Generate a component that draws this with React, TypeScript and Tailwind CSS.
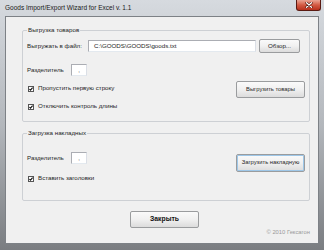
import React from "react";

const Check = () => (
  <svg width="6" height="6" viewBox="0 0 6 6" className="shrink-0">
    <rect x="0.5" y="0.5" width="5" height="5" fill="#fff" stroke="#555" strokeWidth="1" />
    <path d="M1.4 3 L2.5 4.2 L4.6 1.6" fill="none" stroke="#111" strokeWidth="1.1" />
  </svg>
);

const CheckRow = ({ label }: { label: string }) => (
  <div className="flex items-center h-[9px] pl-[1px] gap-[4px]">
    <Check />
    <span className="leading-none">{label}</span>
  </div>
);

const Btn = ({
  children,
  className = "",
}: {
  children: React.ReactNode;
  className?: string;
}) => (
  <div
    className={
      "flex items-center justify-center rounded-[2px] border border-[#9a9c9e] bg-gradient-to-b from-[#fafafa] via-[#f0f0f0] to-[#dcdcdc] leading-none whitespace-nowrap " +
      className
    }
  >
    {children}
  </div>
);

const SepBox = () => (
  <div className="w-[16px] h-[12px] bg-white border border-[#abadb3] border-r-[#dbdfe6] border-b-[#e3e9ef] flex items-center justify-center text-[6px] leading-none">
    ,
  </div>
);

export default function App() {
  return (
    <div
      className="w-[324px] h-[250px] flex flex-col bg-gradient-to-b from-[#d6dadf] via-[#b3b7bc] to-[#7a7d81] text-[#252525] text-[6.2px] overflow-hidden"
      style={{ fontFamily: '"Liberation Sans", Arial, sans-serif' }}
    >
      {/* title bar */}
      <div className="h-[16px] flex items-start shrink-0">
        <div className="pl-[5px] pt-[4px] text-[6.5px] leading-[8px] text-[#202020]">
          Goods Import/Export Wizard for Excel v. 1.1
        </div>
        <div className="ml-auto mr-[3px] w-[25px] h-[11px] rounded-b-[3px] border border-t-0 border-[#5a1a12] bg-gradient-to-b from-[#e9a393] via-[#d35a43] to-[#b8301c] flex items-center justify-center">
          <svg width="8" height="6" viewBox="0 0 8 6">
            <path d="M1.5 0.8 L6.5 5.2 M6.5 0.8 L1.5 5.2" stroke="#4a1008" strokeWidth="2.4" strokeLinecap="round" />
            <path d="M1.5 0.8 L6.5 5.2 M6.5 0.8 L1.5 5.2" stroke="#ffffff" strokeWidth="1.3" strokeLinecap="round" />
          </svg>
        </div>
      </div>

      {/* client area */}
      <div className="flex-1 mx-[5px] mb-[6px] bg-[#f0f0f0] border border-[#7d8186] flex flex-col pl-[16px] pr-[8px] pt-[9px]">
        {/* group 1 */}
        <fieldset className="w-[288px] border border-[#cdd0d4] rounded-[2px] px-[4px] pb-[10px]">
          <legend className="px-[1px] leading-[8px]">Выгрузка товаров</legend>
          <div className="flex items-center h-[14px] mt-[5px]">
            <span className="w-[61px] leading-none">Выгружать в файл:</span>
            <div className="w-[168px] h-[12px] bg-white border border-[#abadb3] border-r-[#dbdfe6] border-b-[#e3e9ef] flex items-center pl-[5px] leading-none">
              C:\GOODS\GOODS\goods.txt
            </div>
            <Btn className="ml-[3px] w-[41px] h-[14px]">Обзор...</Btn>
          </div>
          <div className="flex items-center mt-[11px] h-[12px]">
            <span className="w-[44px] leading-none">Разделитель</span>
            <SepBox />
          </div>
          <div className="flex items-start mt-[5px]">
            <div className="flex flex-col gap-[9px] pt-[3px]">
              <CheckRow label="Пропустить первую строку" />
              <CheckRow label="Отключить контроль длины" />
            </div>
            <Btn className="ml-auto w-[69px] h-[17px] text-[5.8px]">Выгрузить товары</Btn>
          </div>
        </fieldset>

        {/* group 2 */}
        <fieldset className="w-[288px] border border-[#cdd0d4] rounded-[2px] px-[4px] pb-[17px] mt-[7px]">
          <legend className="px-[1px] leading-[8px]">Загрузка накладных</legend>
          <div className="flex items-start mt-[15px]">
            <div className="flex flex-col">
              <div className="flex items-center h-[12px]">
                <span className="w-[44px] leading-none">Разделитель</span>
                <SepBox />
              </div>
              <div className="mt-[10px]">
                <CheckRow label="Вставить заголовки" />
              </div>
            </div>
            <Btn className="ml-auto mt-[2px] w-[69px] h-[18px] text-[5.8px] border-[#2f2f2f] shadow-[inset_0_0_0_1px_#9ec7e8]">
              Загрузить накладную
            </Btn>
          </div>
        </fieldset>

        <Btn className="mt-[10px] ml-[108px] w-[69px] h-[17px] font-bold text-[6.8px] text-[#111]">
          Закрыть
        </Btn>
        <div className="flex justify-end h-[9px] items-center text-[#9a9a9a] text-[5.8px] leading-none">
          © 2010 Гексагон
        </div>
      </div>
    </div>
  );
}
